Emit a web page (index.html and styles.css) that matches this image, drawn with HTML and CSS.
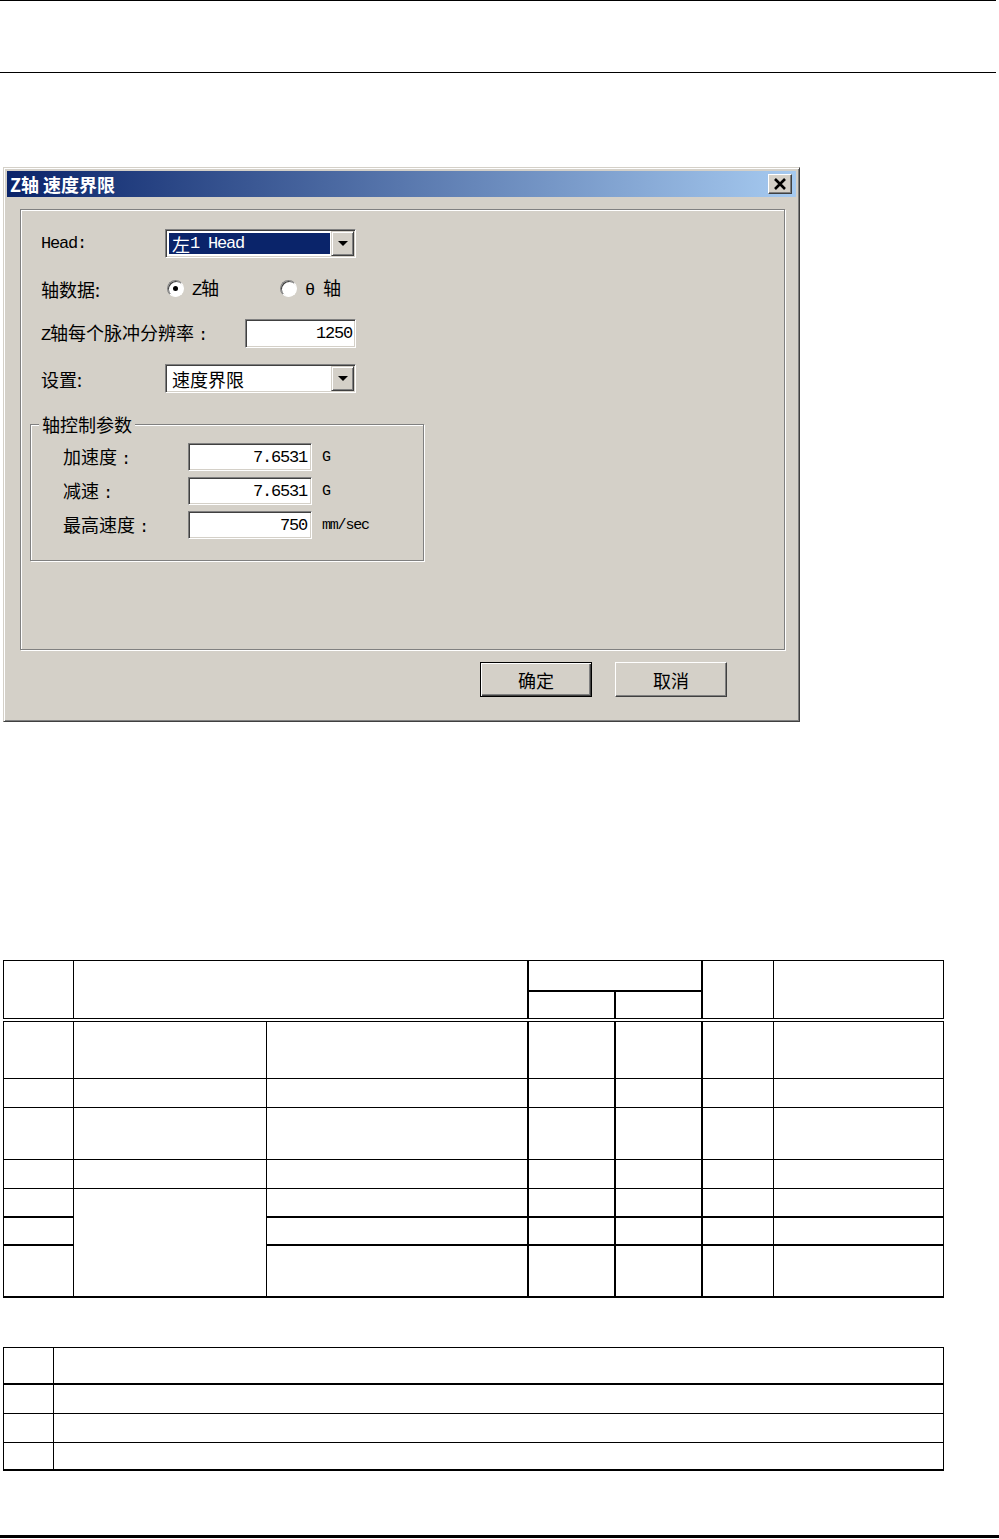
FILE: index.html
```html
<!DOCTYPE html>
<html>
  <head>
    <title>Z轴 速度界限</title>
    <link rel="stylesheet" href="styles.css">
  </head>
  <body>
    <header class="doc-head"></header>

    <main class="content">
      <div class="dialog">
        <div class="titlebar">
          <span class="title">Z轴 速度界限</span>
          <span class="close-btn">
            <svg width="14" height="12" viewBox="0 0 14 12">
              <path d="M2 1 L12 11 M12 1 L2 11" stroke="#000" stroke-width="2.6" fill="none"/>
            </svg>
          </span>
        </div>

        <div class="panel">
          <div class="row">
            <span class="label en">Head:</span>
            <div class="combo sunken">
              <span class="combo-value selected">左<span class="en">1 Head</span></span>
              <span class="combo-btn raised"><span class="arrow"></span></span>
            </div>
          </div>

          <div class="row">
            <span class="label radio-label">轴数据:</span>
            <label class="radio-item">
              <span class="radio checked"></span>
              <span><span class="en">Z</span>轴</span>
            </label>
            <label class="radio-item">
              <span class="radio"></span>
              <span><span class="en">θ </span>轴</span>
            </label>
          </div>

          <div class="row">
            <span class="label wide"><span class="en">Z</span>轴每个脉冲分辨率 <span class="en">:</span></span>
            <span class="field sunken en">1250</span>
          </div>

          <div class="row">
            <span class="label">设置:</span>
            <div class="combo sunken">
              <span class="combo-value">速度界限</span>
              <span class="combo-btn raised"><span class="arrow"></span></span>
            </div>
          </div>

          <fieldset class="group">
            <legend>轴控制参数</legend>
            <div class="grow">
              <span class="glabel">加速度 <span class="en">:</span></span>
              <span class="gfield sunken en">7.6531</span>
              <span class="unit en">G</span>
            </div>
            <div class="grow">
              <span class="glabel">减速 <span class="en">:</span></span>
              <span class="gfield sunken en">7.6531</span>
              <span class="unit en">G</span>
            </div>
            <div class="grow">
              <span class="glabel">最高速度 <span class="en">:</span></span>
              <span class="gfield sunken en">750</span>
              <span class="unit en">mm/sec</span>
            </div>
          </fieldset>
        </div>

        <div class="buttons">
          <span class="btn default">确定</span>
          <span class="btn">取消</span>
        </div>
      </div>

      <table class="spec">
        <colgroup>
          <col class="w70"><col class="w193"><col class="w261"><col class="w87"><col class="w87"><col class="w72"><col class="w170">
        </colgroup>
        <tr class="h30">
          <td rowspan="2" class="dbl"></td>
          <td rowspan="2" colspan="2" class="dbl"></td>
          <td colspan="2" class="tl tb"></td>
          <td rowspan="2" class="tl dbl"></td>
          <td rowspan="2" class="dbl"></td>
        </tr>
        <tr class="h29">
          <td class="tl dbl"></td>
          <td class="tl dbl"></td>
        </tr>
        <tr class="h59">
          <td></td><td></td><td></td><td class="tl"></td><td class="tl"></td><td class="tl"></td><td></td>
        </tr>
        <tr class="h29">
          <td></td><td></td><td></td><td class="tl"></td><td class="tl"></td><td class="tl"></td><td></td>
        </tr>
        <tr class="h52">
          <td></td><td></td><td></td><td class="tl"></td><td class="tl"></td><td class="tl"></td><td></td>
        </tr>
        <tr class="h29">
          <td></td><td></td><td></td><td class="tl"></td><td class="tl"></td><td class="tl"></td><td></td>
        </tr>
        <tr class="h28">
          <td></td><td rowspan="3" class="tb"></td><td></td><td class="tl"></td><td class="tl"></td><td class="tl"></td><td></td>
        </tr>
        <tr class="h28 tt">
          <td></td><td></td><td class="tl"></td><td class="tl"></td><td class="tl"></td><td></td>
        </tr>
        <tr class="h52 tt last">
          <td></td><td></td><td class="tl"></td><td class="tl"></td><td class="tl"></td><td></td>
        </tr>
      </table>

      <table class="notes">
        <colgroup>
          <col class="w50"><col class="w890">
        </colgroup>
        <tr class="h37 head"><td></td><td></td></tr>
        <tr class="h29"><td></td><td></td></tr>
        <tr class="h29"><td></td><td></td></tr>
        <tr class="h28 last"><td></td><td></td></tr>
      </table>
    </main>

    <footer class="doc-foot"></footer>
  </body>
</html>
```

FILE: styles.css
```css
body {
  margin: 0;
  background: #fff;
}
.doc-head {
  width: 996px;
  height: 71px;
  border-top: 1px solid #000;
  border-bottom: 1px solid #000;
}
.content {
  padding-left: 3px;
}
.doc-foot {
  margin-top: 64px;
  border-top: 3px solid #000;
}

/* dialog window */
.dialog {
  box-sizing: border-box;
  width: 797px;
  height: 555px;
  margin-top: 94px;
  padding: 3px;
  background: #d4d0c8;
  border: 1px solid;
  border-color: #d4d0c8 #404040 #404040 #d4d0c8;
  box-shadow: inset 1px 1px #fff, inset -1px -1px #808080;
  font-family: "Noto Sans CJK SC", sans-serif;
  font-size: 18px;
  line-height: 1;
  color: #000;
}
.en {
  font-family: "Liberation Mono", monospace;
  font-size: 17px;
  letter-spacing: -1.2px;
}
.titlebar {
  display: flex;
  align-items: center;
  justify-content: space-between;
  height: 26px;
  padding: 0 4px 0 3px;
  background: linear-gradient(to right, #0a246a, #a6caf0);
}
.title {
  color: #fff;
  font-weight: bold;
  font-size: 18px;
}
.close-btn {
  box-sizing: border-box;
  width: 24px;
  height: 20px;
  display: flex;
  align-items: center;
  justify-content: center;
  background: #d4d0c8;
  border: 1px solid;
  border-color: #fff #404040 #404040 #fff;
  box-shadow: inset -1px -1px #808080;
}

.panel {
  box-sizing: border-box;
  width: 765px;
  height: 441px;
  margin: 12px 0 0 13px;
  padding: 19px 0 0 9px;
  border: 1px solid #808080;
  box-shadow: inset 1px 1px #fff, 1px 1px #fff;
}
.row {
  display: flex;
  align-items: center;
  height: 29px;
  margin: 0 0 16px 11px;
}
.label {
  flex: none;
  width: 124px;
  white-space: nowrap;
}
.radio-label {
  width: 126px;
}
.label.wide {
  width: 204px;
}

.sunken {
  box-sizing: border-box;
  background: #fff;
  border: 1px solid;
  border-color: #808080 #fff #fff #808080;
  box-shadow: inset 1px 1px #404040, inset -1px -1px #d4d0c8;
}
.raised {
  box-sizing: border-box;
  background: #d4d0c8;
  border: 1px solid;
  border-color: #d4d0c8 #404040 #404040 #d4d0c8;
  box-shadow: inset 1px 1px #fff, inset -1px -1px #808080;
}

.combo {
  display: flex;
  width: 191px;
  height: 29px;
  padding: 1px;
}
.combo-value {
  flex: 1;
  display: flex;
  align-items: center;
  margin: 2px 1px 2px 2px;
  padding-left: 3px;
  white-space: nowrap;
}
.combo-value.selected {
  background: #0a246a;
  color: #fff;
}
.combo-btn {
  width: 23px;
  display: flex;
  align-items: center;
  justify-content: center;
}
.arrow {
  width: 0;
  height: 0;
  border-left: 5px solid transparent;
  border-right: 5px solid transparent;
  border-top: 5px solid #000;
}

.radio-item {
  display: flex;
  align-items: center;
  width: 113px;
}
.radio {
  box-sizing: border-box;
  position: relative;
  width: 17px;
  height: 17px;
  margin-right: 8px;
  border-radius: 50%;
  background: #fff;
  border: 1px solid;
  border-color: #808080 #fff #fff #808080;
  box-shadow: inset 1px 1px #404040;
}
.radio.checked::after {
  content: "";
  position: absolute;
  left: 5px;
  top: 5px;
  width: 5px;
  height: 5px;
  border-radius: 50%;
  background: #000;
}

.field {
  width: 111px;
  height: 29px;
  padding: 0 3px 0 2px;
  display: flex;
  align-items: center;
  justify-content: flex-end;
}

/* group box */
.group {
  box-sizing: border-box;
  width: 394px;
  margin: 20px 0 0 0;
  padding: 8px 0 21px 8px;
  border: 1px solid #808080;
  box-shadow: inset 1px 1px #fff, 1px 1px #fff;
}
.group legend {
  padding: 0 3px;
  line-height: 22px;
  background: #d4d0c8;
}
.grow {
  display: flex;
  align-items: center;
  height: 28px;
  margin: 0 0 6px 24px;
}
.grow:last-child {
  margin-bottom: 0;
}
.glabel {
  width: 125px;
  white-space: nowrap;
}
.gfield {
  width: 124px;
  height: 28px;
  padding: 0 4px 0 2px;
  display: flex;
  align-items: center;
  justify-content: flex-end;
}
.unit {
  margin-left: 10px;
  font-size: 15px;
}

.buttons {
  display: flex;
  gap: 23px;
  margin: 12px 0 0 473px;
}
.btn {
  box-sizing: border-box;
  width: 112px;
  height: 35px;
  display: flex;
  align-items: center;
  justify-content: center;
  border: 1px solid;
  border-color: #fff #404040 #404040 #fff;
  box-shadow: inset -1px -1px #808080, inset 1px 1px #d4d0c8;
}
.btn.default {
  border-color: #000;
  box-shadow: inset 1px 1px #fff, inset -1px -1px #404040, inset -2px -2px #808080;
}

/* tables */
.spec,
.notes {
  border-collapse: collapse;
  table-layout: fixed;
  width: 941px;
}
.spec {
  margin-top: 238px;
}
.notes {
  margin-top: 49px;
}
.spec td,
.notes td {
  padding: 0;
  border: 1px solid #000;
}
.w70 { width: 70px; }
.w193 { width: 193px; }
.w261 { width: 261px; }
.w87 { width: 87px; }
.w72 { width: 72px; }
.w170 { width: 170px; }
.w50 { width: 50px; }
.w890 { width: 890px; }

.h28 { height: 28px; }
.h29 { height: 29px; }
.h30 { height: 30px; }
.h37 { height: 37px; }
.h52 { height: 52px; }
.h59 { height: 59px; }

.spec td.tl { border-left-width: 2px; }
.spec td.tb { border-bottom-width: 2px; }
.spec td.dbl { border-bottom: 4px double #000; }
.spec tr.tt td { border-top-width: 2px; }
.spec tr.last td,
.notes tr.last td,
.notes tr.head td { border-bottom-width: 2px; }
```
